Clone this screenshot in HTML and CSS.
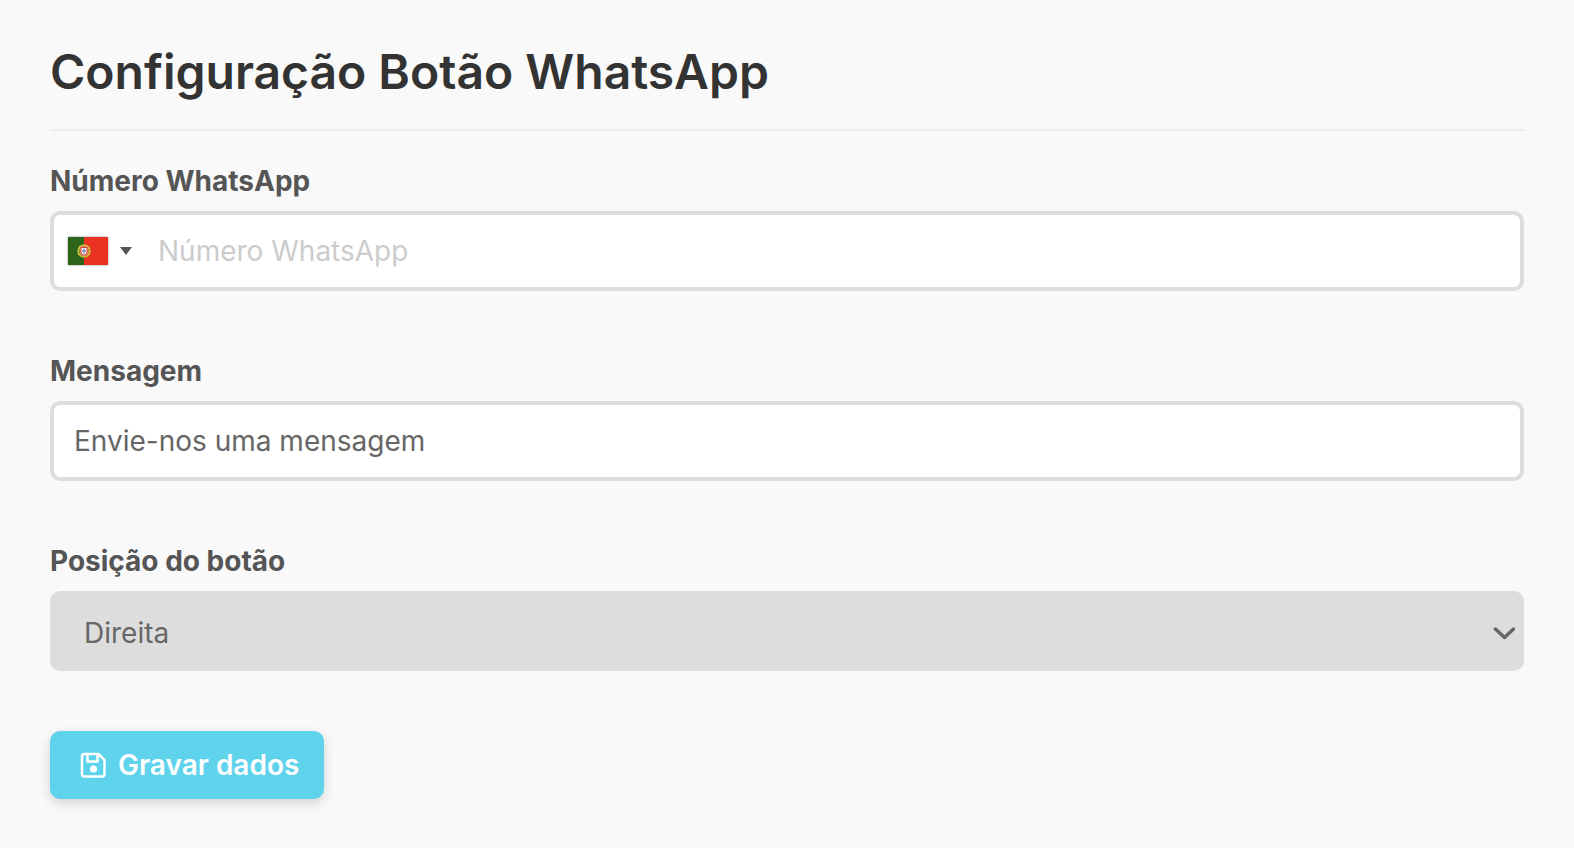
FILE: index.html
```html
<!DOCTYPE html>
<html lang="pt">
<head>
    <meta charset="UTF-8">
    <meta name="viewport" content="width=device-width, initial-scale=1.0">
    <title>Configuração Botão WhatsApp</title>
    <link rel="stylesheet" href="styles.css">
</head>
<body>
    <main class="container">
        <h1>Configuração Botão WhatsApp</h1>
        <form class="settings-form">
            <div class="form-group">
                <label for="phone">Número WhatsApp</label>
                <div class="phone-field">
                    <button type="button" class="country-btn" aria-label="Portugal">
                        <svg class="flag" viewBox="0 0 80 56" aria-hidden="true">
                            <rect width="80" height="56" fill="#ea3323"/>
                            <rect width="32" height="56" fill="#2c6519"/>
                            <circle cx="32" cy="28" r="12" fill="none" stroke="#c9c233" stroke-width="3"/>
                            <path d="M21 22l22 12M21 34l22-12M20 28h24" stroke="#c9c233" stroke-width="2" fill="none"/>
                            <path d="M24 19h16v11a8 8 0 0 1-16 0z" fill="#e0413a" stroke="#e8d0a0" stroke-width="1"/>
                            <path d="M27 22h10v8a5 5 0 0 1-10 0z" fill="#f2f4fa"/>
                            <path d="M32 23v10M28 28h8" stroke="#7d93c8" stroke-width="3" fill="none"/>
                        </svg>
                        <svg class="caret" viewBox="0 0 12 8" aria-hidden="true">
                            <path d="M0 0h12L6 8z" fill="#555"/>
                        </svg>
                    </button>
                    <input type="tel" id="phone" name="phone" placeholder="Número WhatsApp">
                </div>
            </div>
            <div class="form-group">
                <label for="message">Mensagem</label>
                <input type="text" id="message" name="message" class="text-input" value="Envie-nos uma mensagem">
            </div>
            <div class="form-group">
                <label for="position">Posição do botão</label>
                <div class="select-wrap">
                    <select id="position" name="position">
                        <option value="right" selected>Direita</option>
                        <option value="left">Esquerda</option>
                    </select>
                    <svg class="chevron" viewBox="0 0 44 28" aria-hidden="true">
                        <path d="M5 6l18 17L41 6" fill="none" stroke="#666" stroke-width="7" stroke-linecap="round" stroke-linejoin="round"/>
                    </svg>
                </div>
            </div>
            <button type="submit" class="submit-btn">
                <svg class="save-icon" viewBox="0 0 52 52" fill="none" stroke="#fff" stroke-width="5" stroke-linejoin="round" aria-hidden="true">
                    <path d="M9 4h28l12 12v28a5 5 0 0 1-5 5H9a5 5 0 0 1-5-5V9a5 5 0 0 1 5-5z"/>
                    <path d="M15 4v15h20V4"/>
                    <circle cx="27" cy="34" r="7" fill="#fff" stroke="none"/>
                </svg>
                Gravar dados
            </button>
        </form>
    </main>
</body>
</html>
```

FILE: styles.css
```css
* {
    box-sizing: border-box;
}
body {
    font-family: Inter, "Liberation Sans", sans-serif;
    font-size: 28px;
    margin: 0;
    background-color: #f9f9f9;
    color: #555;
}
.container {
    padding: 50px;
}
h1 {
    margin: 0 0 30px;
    padding-bottom: 35px;
    border-bottom: 2px solid #eee;
    font-size: 48px;
    font-weight: 600;
    line-height: 44px;
    color: #333;
}
.form-group {
    margin-bottom: 60px;
}
label {
    display: block;
    margin-bottom: 10px;
    font-weight: 700;
    line-height: 40px;
}
input, select, button {
    font-family: inherit;
    font-size: 28px;
    color: #666;
}
.phone-field, .text-input {
    width: 100%;
    height: 80px;
    border: 4px solid #ddd;
    border-radius: 10px;
    background-color: #fff;
}
.text-input {
    padding: 0 20px;
}
.phone-field {
    display: flex;
    align-items: center;
}
.country-btn {
    display: flex;
    align-items: center;
    gap: 12px;
    padding: 0 14px;
    border: none;
    background: none;
    cursor: pointer;
}
.flag {
    width: 40px;
    height: 28px;
    box-shadow: 0 0 2px #888;
}
.caret {
    width: 12px;
    height: 8px;
}
.phone-field input {
    flex: 1;
    min-width: 0;
    height: 100%;
    padding: 0 12px;
    border: none;
    background: none;
}
.phone-field input::placeholder {
    color: #ccc;
}
.select-wrap {
    display: grid;
    align-items: center;
}
.select-wrap select, .chevron {
    grid-area: 1 / 1;
}
select {
    appearance: none;
    width: 100%;
    height: 80px;
    padding: 4px 34px 0;
    border: none;
    border-radius: 10px;
    background-color: #ddd;
}
.chevron {
    justify-self: end;
    width: 22px;
    height: 14px;
    margin-right: 9px;
    margin-top: 4px;
    pointer-events: none;
}
.submit-btn {
    display: flex;
    align-items: center;
    gap: 12px;
    height: 68px;
    padding: 0 25px 0 30px;
    border: none;
    border-radius: 10px;
    background-color: #5fd2ec;
    color: #fff;
    font-weight: 600;
    box-shadow: 0 4px 12px rgba(0, 0, 30, 0.16);
    cursor: pointer;
}
.save-icon {
    width: 26px;
    height: 26px;
}
```
